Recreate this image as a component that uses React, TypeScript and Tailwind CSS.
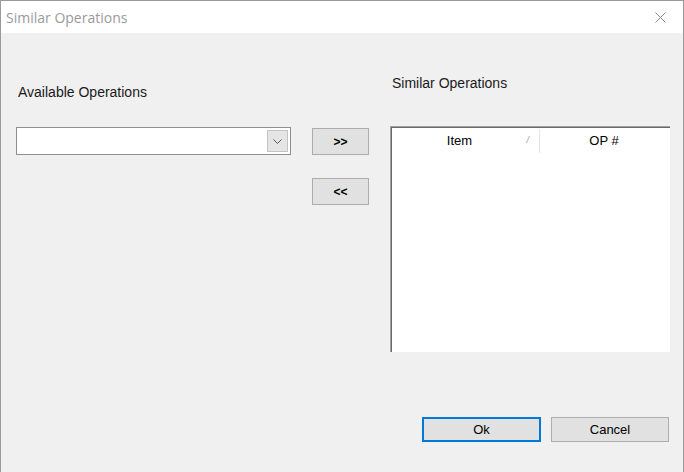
import React from "react";

const ui = { fontFamily: '"Liberation Sans", Arial, sans-serif' };

function WinButton({ label, width, focused }: { label: string; width: string; focused?: boolean }) {
  return (
    <button
      className={`${width} h-[25px] flex items-center justify-center bg-[#e1e1e1] text-[13px] text-black ${
        focused ? "border-2 border-[#0078d7]" : "border border-[#adadad]"
      }`}
      style={ui}
    >
      {label}
    </button>
  );
}

export default function App() {
  return (
    <div className="w-[684px] h-[472px] flex flex-col bg-[#f0f0f0] border-t border-l border-r border-[#9a9a9a] overflow-hidden">
      {/* title bar */}
      <div className="h-[32px] bg-white flex items-center justify-between shrink-0">
        <span
          className="pl-[5px] text-[14px] text-[#9a9a9a]"
          style={{ fontFamily: '"Open Sans", "Noto Sans", sans-serif' }}
        >
          Similar Operations
        </span>
        <div className="w-[46px] h-[32px] flex items-center justify-center">
          <svg width="11" height="11" viewBox="0 0 11 11">
            <path d="M0.5 0.5 L10.5 10.5 M10.5 0.5 L0.5 10.5" stroke="#8a8a8a" strokeWidth="1" fill="none" />
          </svg>
        </div>
      </div>

      <div className="flex flex-col flex-1" style={ui}>
        <div className="flex">
          {/* left column */}
          <div className="ml-[15px] w-[275px] flex flex-col">
            <div className="mt-[51px] h-[16px] text-[14px] leading-[16px] text-[#1a1a1a] pl-[2px]">
              Available Operations
            </div>
            <div className="mt-[27px] h-[28px] bg-white border border-[#8f8f8f] flex justify-end items-center pr-[2px]">
              <div className="w-[21px] h-[22px] bg-[#e5e5e5] border border-[#c4c4c4] flex items-center justify-center">
                <svg width="9" height="5" viewBox="0 0 9 5">
                  <path d="M0.5 0.5 L4.5 4.5 L8.5 0.5" stroke="#555" strokeWidth="1" fill="none" />
                </svg>
              </div>
            </div>
          </div>

          {/* middle column */}
          <div className="ml-[21px] flex flex-col">
            <button className="mt-[95px] w-[57px] h-[27px] bg-[#e1e1e1] border border-[#adadad] text-[12px] font-bold text-black">
              &gt;&gt;
            </button>
            <button className="mt-[23px] w-[57px] h-[27px] bg-[#e1e1e1] border border-[#adadad] text-[12px] font-bold text-black">
              &lt;&lt;
            </button>
          </div>

          {/* right column */}
          <div className="ml-[21px] flex flex-col">
            <div className="mt-[42px] h-[16px] text-[14px] leading-[16px] text-[#1a1a1a] pl-[2px]">
              Similar Operations
            </div>
            <div className="mt-[35px] w-[280px] h-[226px] border-t border-l border-[#a0a0a0]">
              <div className="w-full h-full bg-white border-t border-l border-[#696969] flex flex-col">
                <div className="h-[26px] flex text-[13px] text-black">
                  <div className="w-[147px] relative flex items-center justify-center pr-[12px]">
                    Item
                    <span className="absolute right-[10px] top-[6px] text-[9px] text-[#999] italic">/</span>
                  </div>
                  <div className="w-px h-[24px] mt-[1px] bg-[#e5e5e5]" />
                  <div className="w-[128px] flex items-center justify-center">OP #</div>
                </div>
              </div>
            </div>
          </div>
        </div>

        {/* footer */}
        <div className="mt-[65px] flex justify-end gap-[10px] pr-[14px]">
          <WinButton label="Ok" width="w-[119px]" focused />
          <WinButton label="Cancel" width="w-[118px]" />
        </div>
      </div>
    </div>
  );
}
